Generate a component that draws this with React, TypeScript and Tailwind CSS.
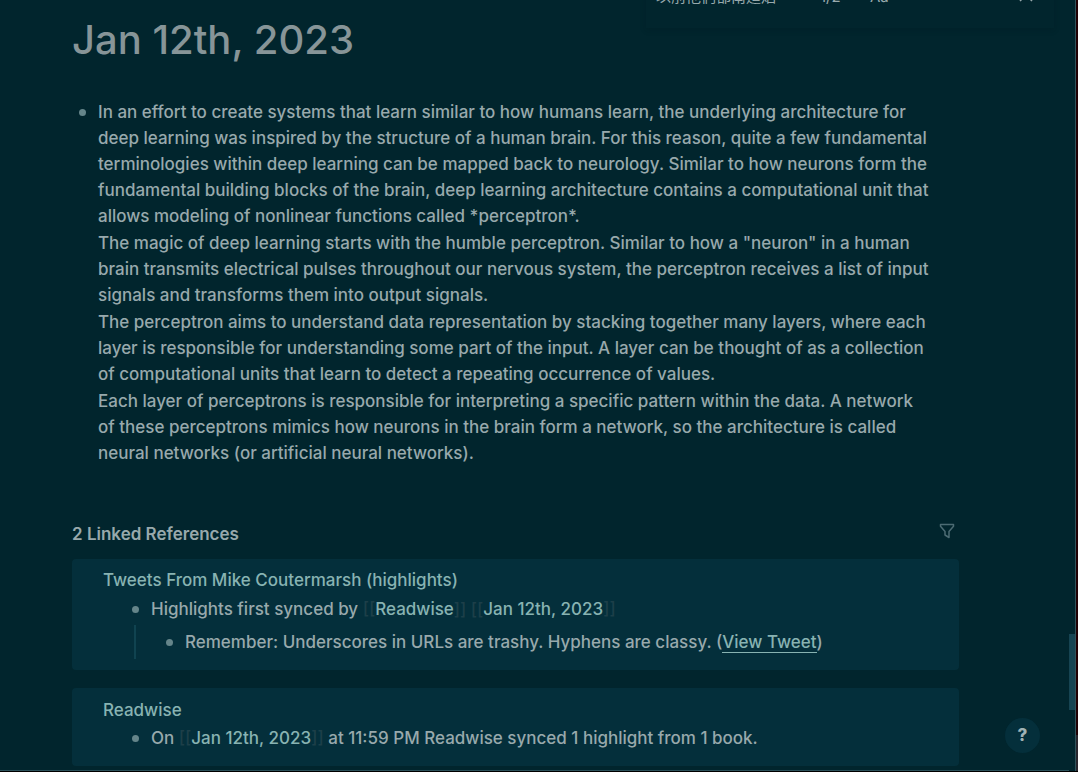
import type { ReactNode } from "react";

const paragraphs: string[] = [
  "In an effort to create systems that learn similar to how humans learn, the underlying architecture for deep learning was inspired by the structure of a human brain. For this reason, quite a few fundamental terminologies within deep learning can be mapped back to neurology. Similar to how neurons form the fundamental building blocks of the brain, deep learning architecture contains a computational unit that allows modeling of nonlinear functions called *perceptron*.",
  'The magic of deep learning starts with the humble perceptron. Similar to how a "neuron" in a human brain transmits electrical pulses throughout our nervous system, the perceptron receives a list of input signals and transforms them into output signals.',
  "The perceptron aims to understand data representation by stacking together many layers, where each layer is responsible for understanding some part of the input. A layer can be thought of as a collection of computational units that learn to detect a repeating occurrence of values.",
  "Each layer of perceptrons is responsible for interpreting a specific pattern within the data. A network of these perceptrons mimics how neurons in the brain form a network, so the architecture is called neural networks (or artificial neural networks).",
];

function Bullet() {
  return (
    <span className="flex h-[26px] w-2 shrink-0 items-center" aria-hidden="true">
      <span className="size-[7px] rounded-full bg-[#65858a]" />
    </span>
  );
}

function PageRef({ children }: { children: ReactNode }) {
  return (
    <span>
      <span className="text-[#1d3f49]">[[</span>
      <a href="#page" className="text-[#88b3b2]">{children}</a>
      <span className="text-[#1d3f49]">]]</span>
    </span>
  );
}

function FindBar() {
  return (
    <div role="search" className="absolute -top-4 right-6 flex h-11 w-[408px] items-start pt-[3px] pl-2.5 shadow-[0_2px_6px_rgba(0,20,26,0.2)]">
      <span className="w-[164px] text-[15px] leading-5">以前他們都南迤焰</span>
      <span className="w-[50px] text-[15px] leading-5">1/2</span>
      <button type="button" aria-label="Match case" className="text-[15px] leading-5">Aa</button>
      <button type="button" aria-label="Close" className="mr-5 ml-auto">
        <svg className="size-4" viewBox="0 0 16 16" fill="none" stroke="currentColor" strokeWidth="1.5">
          <path d="M2 2 14 14M14 2 2 14" />
        </svg>
      </button>
    </div>
  );
}

export default function App() {
  return (
    <div className="relative flex h-screen flex-col overflow-hidden bg-black font-['Inter','Noto_Sans_CJK_TC',sans-serif] text-[#98a9ac]">
      <div className="flex min-h-0 flex-1">
        <main className="min-w-0 flex-1 overflow-hidden border-b border-[#2b5059] bg-[#01252d] pr-[110px] pl-[72px]">
          <h1 className="pt-4 text-[40px] leading-12 font-medium text-[#879598]">Jan 12th, 2023</h1>
          <div className="mt-[35px] flex gap-[11px] pr-[27px] pl-[7px] text-[17px] leading-[26px] font-medium">
            <Bullet />
            <div className="flex min-w-0 flex-col gap-px">
              {paragraphs.map((p) => (
                <p key={p}>{p}</p>
              ))}
            </div>
          </div>

          <section className="mt-[55px] text-[17px] leading-[26px] font-medium">
            <div className="flex items-center justify-between">
              <h2 className="font-semibold">2 Linked References</h2>
              <button type="button" aria-label="Filter references" className="mr-1 mb-1.5 text-[#4c6b73]">
                <svg className="size-4" viewBox="0 0 16 16" fill="none" stroke="currentColor" strokeWidth="1.5" strokeLinejoin="round">
                  <path d="M1.5 1.5h13v1.8L10 8.5v6l-4-2.5V8.500L1.500 3.300z" />
                </svg>
              </button>
            </div>

            <div className="mt-3 rounded bg-[#042f3b] pt-2 pb-[11px] pl-[31px]">
              <a href="#tweets" className="block text-[#88b3b2]">Tweets From Mike Coutermarsh (highlights)</a>
              <div className="mt-[3px] flex gap-[11px] pl-[29px]">
                <Bullet />
                <p>Highlights first synced by <PageRef>Readwise</PageRef> <PageRef>Jan 12th, 2023</PageRef></p>
              </div>
              <div className="mt-[3px] ml-[31px] flex gap-[11px] border-l-2 border-[#104350] py-1 pl-[30px]">
                <Bullet />
                <p>Remember: Underscores in URLs are trashy. Hyphens are classy. (<a href="#tweet" className="border-b border-[#88b3b2] text-[#88b3b2]">View Tweet</a>)</p>
              </div>
            </div>

            <div className="mt-[18px] rounded bg-[#042f3b] pt-[9px] pb-[15px] pl-[31px]">
              <a href="#readwise" className="block text-[#88b3b2]">Readwise</a>
              <div className="mt-0.5 flex gap-[11px] pl-[29px]">
                <Bullet />
                <p>On <PageRef>Jan 12th, 2023</PageRef> at 11:59 PM Readwise synced 1 highlight from 1 book.</p>
              </div>
            </div>
          </section>
        </main>
        <div className="flex w-[7px] flex-col border-r border-[#31535b] bg-[#01252d] pt-[634px]">
          <div className="h-[76px] bg-[#164452]" />
        </div>
        <div className="flex w-0.5 flex-col bg-[#28262d]">
          <div className="h-[735px] bg-[#210003]" />
        </div>
      </div>
      <div className="h-px bg-black" />
      <FindBar />
      <button type="button" aria-label="Help" className="absolute right-[38px] bottom-[19px] size-[35px] rounded-full bg-[#042f3b] text-[17px] font-extrabold text-[#a0b2b5]">?</button>
    </div>
  );
}
